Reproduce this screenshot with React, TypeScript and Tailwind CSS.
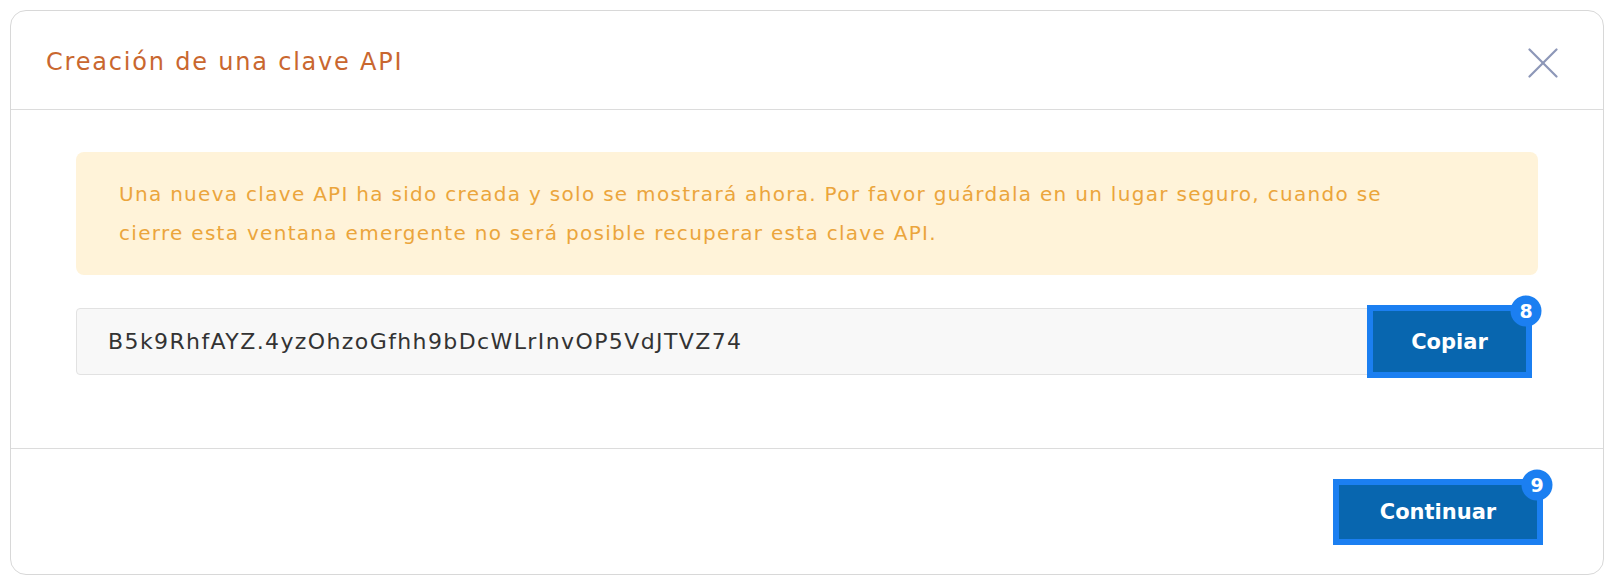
function Badge({ n }: { n: number }) {
  return (
    <span className="absolute top-0 right-0 translate-x-1/2 -translate-y-1/2 flex h-[31px] w-[31px] items-center justify-center rounded-full bg-[#1b7ff1] text-[19px] font-bold leading-none text-white">
      {n}
    </span>
  );
}

export default function App() {
  const apiKey = 'B5k9RhfAYZ.4yzOhzoGfhh9bDcWLrInvOP5VdJTVZ74';

  return (
    <div className="min-h-screen bg-white p-[10px] font-['DejaVu_Sans',sans-serif]">
      <div className="flex flex-col rounded-[16px] border border-[#d8d8d8] bg-white">
        {/* Header */}
        <div className="flex h-[99px] items-center justify-between border-b border-[#dcdcdc] pl-[35px] pr-[45px]">
          <h2 className="pt-[4px] text-[24px] font-normal tracking-[1.8px] text-[#c9672f]">Creación de una clave API</h2>
          <button className="mt-[5px] text-[#8d97b8]">
            <svg width="30" height="30" viewBox="0 0 30 30" fill="none" stroke="currentColor" strokeWidth="2.2" strokeLinecap="round">
              <line x1="1.5" y1="1.5" x2="28.5" y2="28.5" />
              <line x1="28.5" y1="1.5" x2="1.5" y2="28.5" />
            </svg>
          </button>
        </div>

        {/* Body */}
        <div className="flex flex-col gap-[33px] px-[65px] pt-[42px] pb-[73px]">
          <div className="flex h-[123px] items-center rounded-[8px] bg-[#fff3d9] px-[43px]">
            <p className="text-[20px] leading-[39px] tracking-[1.3px] text-[#eba53c]">
              Una nueva clave API ha sido creada y solo se mostrará ahora. Por favor guárdala en un lugar seguro, cuando se
              <br />
              cierre esta ventana emergente no será posible recuperar esta clave API.
            </p>
          </div>

          <div className="flex items-center pr-[9px]">
            <input
              readOnly
              value={apiKey}
              className="h-[67px] flex-1 rounded-l-[4px] border border-[#e2e2e2] bg-[#f8f8f8] px-[31px] text-[22px] tracking-[1.4px] text-[#333] outline-none"
            />
            <button className="relative h-[67px] w-[159px] border-[3px] border-[#1b7ff1] bg-[#0866af] pt-[2px] text-[21px] font-bold text-white outline-[3px] outline-solid outline-[#1b7ff1]">
              Copiar
              <Badge n={8} />
            </button>
          </div>
        </div>

        {/* Footer */}
        <div className="flex h-[126px] items-center justify-end border-t border-[#dcdcdc] pr-[63px]">
          <button className="relative h-[60px] w-[204px] border-[3px] border-[#1b7ff1] bg-[#0866af] pt-[3px] text-[21px] font-bold text-white outline-[3px] outline-solid outline-[#1b7ff1]">
            Continuar
            <Badge n={9} />
          </button>
        </div>
      </div>
    </div>
  );
}
